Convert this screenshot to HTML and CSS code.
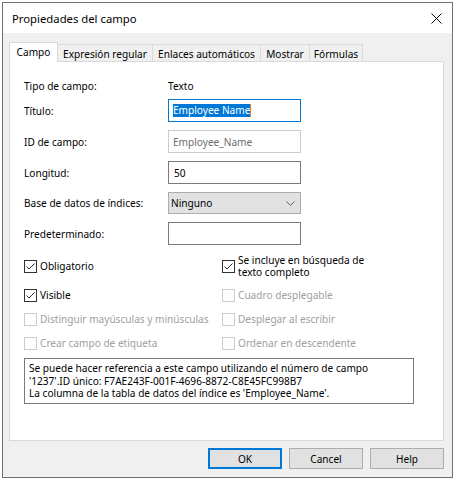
FILE: index.html
```html
<!DOCTYPE html>
<html lang="es">
<head>
<meta charset="utf-8">
<title>Propiedades del campo</title>
<link rel="stylesheet" href="styles.css">
</head>
<body>
<div class="window">
  <div class="titlebar">
    <span class="title">Propiedades del campo</span>
    <svg class="close" width="11" height="11" viewBox="0 0 11 11"><path d="M0.5 0.5 L10.5 10.5 M10.5 0.5 L0.5 10.5" stroke="#000" stroke-width="1" fill="none"/></svg>
  </div>
  <div class="client">
    <div class="tabs">
      <div class="tab tab-sel t-campo">Campo</div>
      <div class="tab t-expr">Expresión regular</div>
      <div class="tab t-enl">Enlaces automáticos</div>
      <div class="tab t-most">Mostrar</div>
      <div class="tab t-form">Fórmulas</div>
    </div>
    <div class="panel">
      <div class="row row-type"><span class="lbl">Tipo de campo:</span><span class="val">Texto</span></div>
      <div class="row row-first"><span class="lbl">Título:</span><div class="edit edit-focus"><span class="selection">Employee Name</span><span class="caret"></span></div></div>
      <div class="row"><span class="lbl">ID de campo:</span><div class="edit edit-disabled">Employee_Name</div></div>
      <div class="row"><span class="lbl">Longitud:</span><div class="edit">50</div></div>
      <div class="row row-combo"><span class="lbl">Base de datos de índices:</span><div class="combo"><span>Ninguno</span><svg class="chev" width="9" height="5" viewBox="0 0 9 5"><path d="M0.5 0.5 L4.5 4.5 L8.5 0.5" stroke="#606060" stroke-width="1" fill="none"/></svg></div></div>
      <div class="row"><span class="lbl">Predeterminado:</span><div class="edit"></div></div>

      <div class="checks">
        <label class="cb"><span class="box"><svg width="11" height="11" viewBox="0 0 11 11"><path d="M1.5 5.5 L4 8 L9.5 2.5" stroke="#333" stroke-width="1" fill="none"/></svg></span><span>Obligatorio</span></label>
        <label class="cb"><span class="box"><svg width="11" height="11" viewBox="0 0 11 11"><path d="M1.5 5.5 L4 8 L9.5 2.5" stroke="#333" stroke-width="1" fill="none"/></svg></span><span class="two">Se incluye en búsqueda de<br>texto completo</span></label>
        <label class="cb"><span class="box"><svg width="11" height="11" viewBox="0 0 11 11"><path d="M1.5 5.5 L4 8 L9.5 2.5" stroke="#333" stroke-width="1" fill="none"/></svg></span><span>Visible</span></label>
        <label class="cb cb-off"><span class="box"></span><span>Cuadro desplegable</span></label>
        <label class="cb cb-off"><span class="box"></span><span>Distinguir mayúsculas y minúsculas</span></label>
        <label class="cb cb-off"><span class="box"></span><span>Desplegar al escribir</span></label>
        <label class="cb cb-off"><span class="box"></span><span>Crear campo de etiqueta</span></label>
        <label class="cb cb-off"><span class="box"></span><span>Ordenar en descendente</span></label>
      </div>

      <div class="info">Se puede hacer referencia a este campo utilizando el número de campo<br>'1237'.ID único: F7AE243F-001F-4696-8872-C8E45FC998B7<br>La columna de la tabla de datos del índice es 'Employee_Name'.</div>
    </div>
    <div class="buttons">
      <div class="btn btn-default">OK</div>
      <div class="btn">Cancel</div>
      <div class="btn">Help</div>
    </div>
  </div>
</div>
</body>
</html>
```

FILE: styles.css
```css
* { box-sizing: border-box; }
html, body { margin: 0; padding: 0; background: #fff; }
body {
  font-family: "Noto Sans", "Segoe UI", sans-serif;
  font-size: 10.1px;
  color: #000;
}
.window {
  margin: 2px 0 0 2px;
  width: 451px;
  height: 476px;
  border: 1px solid #707070;
  display: flex;
  flex-direction: column;
}
.titlebar {
  height: 30px;
  background: #fff;
  display: flex;
  align-items: center;
  padding: 0 10px 0 9px;
}
.title { font-size: 11.3px; flex: 1; padding-top: 1px; }
.close { display: block; }
.client {
  flex: 1;
  background: #f0f0f0;
  padding: 9px 8px 8px 6px;
  display: flex;
  flex-direction: column;
}
.tabs {
  height: 19px;
  display: flex;
  align-items: flex-end;
}
.tab {
  height: 17px;
  border: 1px solid #d9d9d9;
  border-bottom: none;
  background: #f0f0f0;
  margin-left: -1px;
  display: flex;
  align-items: center;
  justify-content: center;
  white-space: nowrap;
  padding-top: 1px;
}
.tab-sel {
  height: 20px;
  margin-left: 0;
  margin-bottom: -1px;
  background: #fff;
  position: relative;
  z-index: 1;
  padding-top: 0;
  padding-bottom: 1px;
}
.t-campo { width: 49px; }
.t-expr { width: 96px; }
.t-enl { width: 109px; }
.t-most { width: 50px; }
.t-form { width: 54px; }
.panel {
  height: 380px;
  width: 435px;
  border: 1px solid #d9d9d9;
  background: #fff;
  padding: 15px 0 0 14px;
}
.row {
  display: flex;
  align-items: center;
  height: 23px;
  margin-top: 8px;
}
.row-type { height: 18px; margin-top: 0; }
.row-first { margin-top: 4px; }
.row-combo { height: 22px; }
.lbl { width: 144px; flex: none; }
.edit {
  width: 133px;
  height: 23px;
  border: 1px solid #7a7a7a;
  background: #fff;
  padding-left: 5px;
  display: flex;
  align-items: center;
}
.edit-focus { border-color: #0078d7; padding-left: 4px; }
.edit-disabled { border-color: #cccccc; color: #6d6d6d; padding-left: 4px; }
.selection {
  background: #0078d7;
  color: #fff;
  line-height: 13px;
}
.caret {
  width: 1px;
  height: 13px;
  background: #f07a2a;
}
.combo {
  width: 133px;
  height: 22px;
  border: 1px solid #adadad;
  background: #e1e1e1;
  padding: 0 5px 0 2px;
  display: flex;
  align-items: center;
  justify-content: space-between;
}
.chev { display: block; }
.checks {
  margin-top: 8px;
  display: grid;
  grid-template-columns: 198px 1fr;
  grid-template-rows: 26px 16px 16px 16px;
  row-gap: 8px;
}
.cb {
  display: flex;
  align-items: center;
}
.box {
  width: 13px;
  height: 13px;
  border: 1px solid #333;
  background: #fff;
  margin-right: 3px;
  flex: none;
  display: flex;
  align-items: center;
  justify-content: center;
}
.box svg { display: block; }
.two { line-height: 12.5px; }
.cb-off { color: #a0a0a0; }
.cb-off .box { border-color: #cccccc; }
.info {
  margin-top: 7px;
  width: 390px;
  border: 1px solid #7a7a7a;
  padding: 3px 4px;
  line-height: 12.5px;
}
.buttons {
  margin-top: 7px;
  display: flex;
  justify-content: flex-end;
  gap: 7px;
}
.btn {
  width: 74px;
  height: 21px;
  border: 1px solid #adadad;
  background: #e1e1e1;
  display: flex;
  align-items: center;
  justify-content: center;
}
.btn-default { border: 2px solid #0078d7; }
```
